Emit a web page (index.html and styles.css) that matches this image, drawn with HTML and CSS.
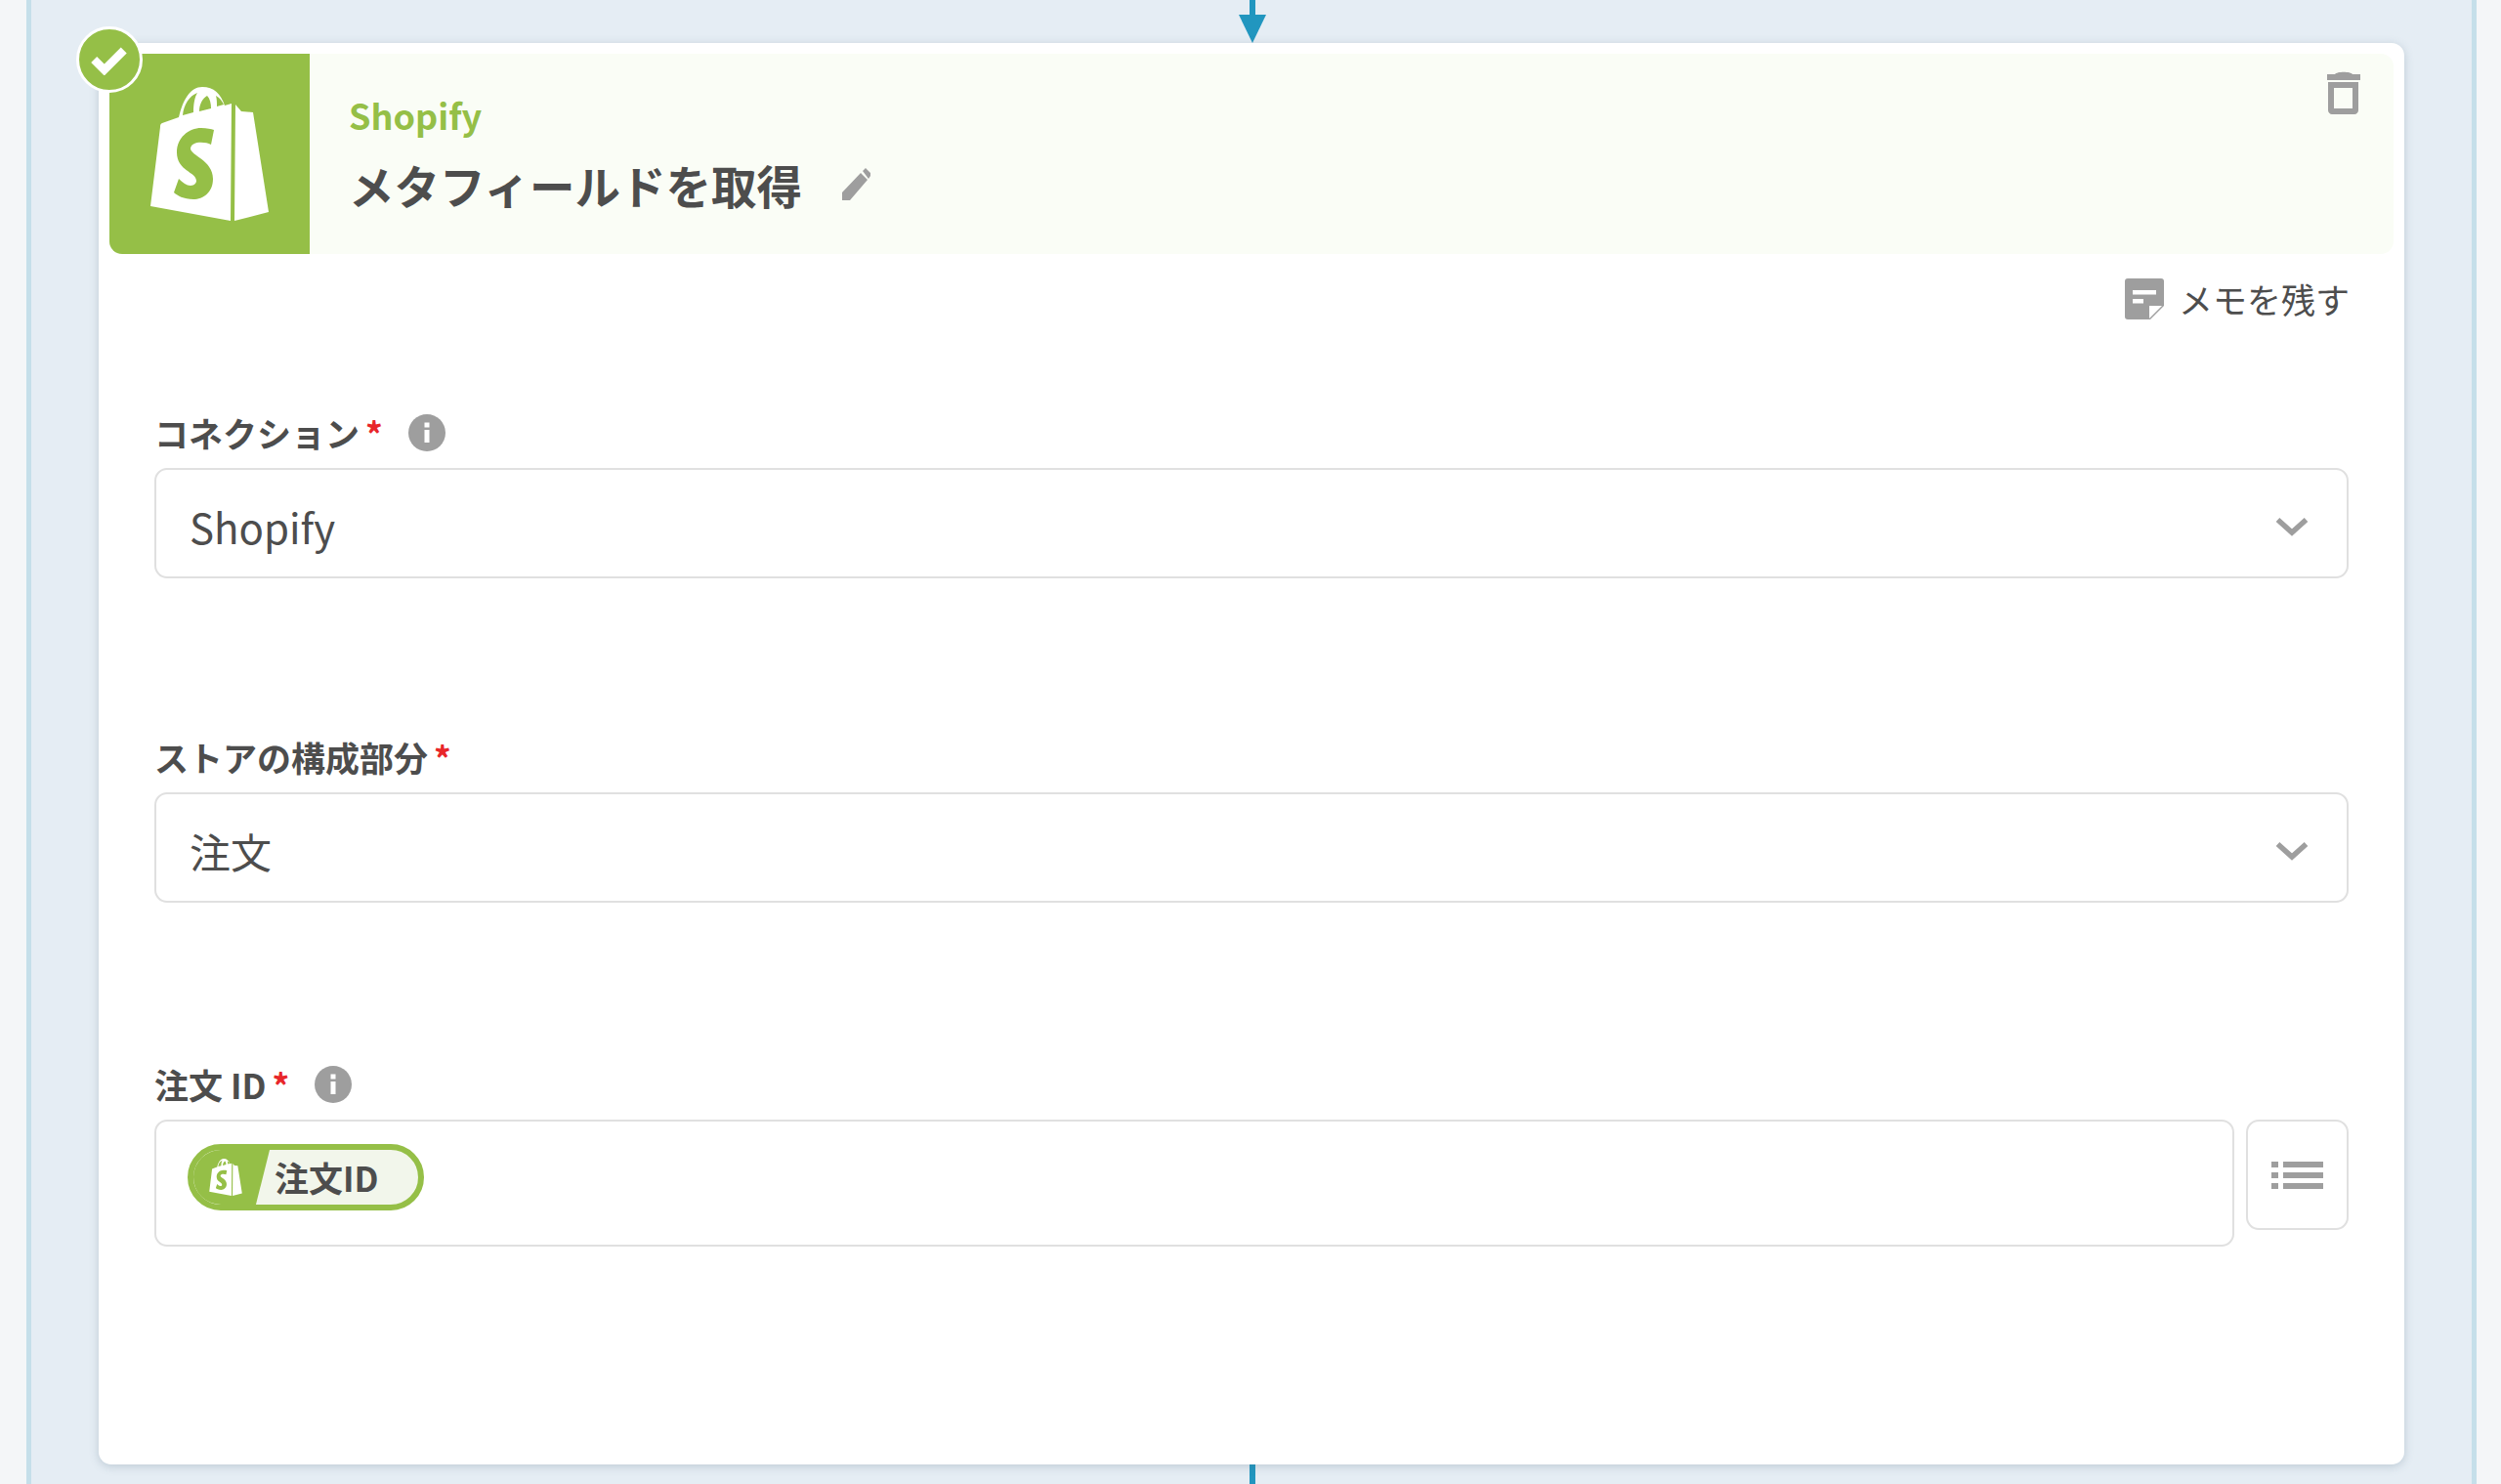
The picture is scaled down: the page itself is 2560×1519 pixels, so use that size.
FILE: index.html
```html
<!DOCTYPE html>
<html lang="ja">
<head>
    <meta charset="UTF-8">
    <meta name="viewport" content="width=device-width, initial-scale=1.0">
    <title>メタフィールドを取得</title>
    <link rel="stylesheet" href="styles.css">
</head>
<body>

    <svg width="0" height="0" class="defs">
        <defs>
            <symbol id="bag" viewBox="0 0 121 137">
                <path fill-rule="evenodd" d="M87 18 L86 137 L121 128 L105 26 L93 25 Z M83 17 L76 19 C72 7 65 0 53 0 C41 0 33 13 29 31 L12 37 C10 38 10 39 10 41 L0 122 L82 137 Z M33 29 C34 18 40 9 48 6 C45 11 44 18 44 26 Z M50 25 C50 18 53 12 58 9 C61 12 62 17 62 22 Z M67 9 C71 11 73 14 75 18 L68 20 C68 16 68 12 67 9 Z M65 44 L62 59 C56 56 42 55 41 63 C41 70 64 75 64 94 C64 108 54 115 44 115 C34 115 27 111 24 108 L29 94 C33 98 37 101 41 101 C45 101 47 98 47 96 C47 87 27 86 27 67 C27 52 39 42 52 42 C58 42 62 43 65 44 Z"/>
            </symbol>
            <symbol id="info" viewBox="0 0 38 38">
                <circle cx="19" cy="19" r="19" fill="#9e9e9e"/>
                <rect x="16.5" y="16" width="5" height="13" fill="#fff"/>
                <rect x="16.5" y="8.5" width="5" height="5" fill="#fff"/>
            </symbol>
            <symbol id="chevron" viewBox="0 0 34 20">
                <path d="M2.5 3 L17 16 L31.5 3" fill="none" stroke="#9e9e9e" stroke-width="5.5"/>
            </symbol>
        </defs>
    </svg>

    <div class="panel">
        <div class="connector-top">
            <span class="connector-line"></span>
            <span class="connector-head"></span>
        </div>

        <div class="card">
            <span class="status-badge">
                <svg width="40" height="32" viewBox="0 0 38 30"><path d="M4 15 L14 25 L33 6" fill="none" stroke="#fff" stroke-width="8"/></svg>
            </span>

            <div class="card-head">
                <div class="app-icon">
                    <svg class="app-logo"><use href="#bag"/></svg>
                </div>
                <div class="head-text">
                    <div class="app-name">Shopify</div>
                    <div class="step-title">
                        <span>メタフィールドを取得</span>
                        <svg class="edit-icon" viewBox="0 0 29 34"><path d="M0 33 L0 25 L19 5 L26 12 L8 33 Z M21 3 L24 0 L29 5 L29 8 L27 11 Z" fill="#9e9e9e"/></svg>
                    </div>
                </div>
                <svg class="trash-icon" viewBox="0 0 34 44">
                    <path fill="#9e9e9e" fill-rule="evenodd" d="M0 3 H8 C10 0 24 0 26 3 H34 V9 H0 Z M1 11 H32 V40 C32 42 30 44 28 44 H5 C3 44 1 42 1 40 Z M7 17 V38 H26 V17 Z"/>
                </svg>
            </div>

            <div class="memo-row">
                <svg class="memo-icon" viewBox="0 0 40 42">
                    <path fill="#9e9e9e" d="M3 0 H37 C39 0 40 1 40 3 V28 L26 42 H3 C1 42 0 41 0 39 V3 C0 1 1 0 3 0 Z"/>
                    <rect x="8" y="12" width="24" height="4.5" fill="#fff"/>
                    <rect x="8" y="21" width="11" height="4.5" fill="#fff"/>
                    <path fill="#fff" d="M25 41 V28 H38 Z"/>
                </svg>
                <span>メモを残す</span>
            </div>

            <div class="field">
                <div class="field-label">
                    <span>コネクション</span><span class="required">*</span>
                    <svg class="info-icon"><use href="#info"/></svg>
                </div>
                <div class="select-box">
                    <span>Shopify</span>
                    <svg class="chevron"><use href="#chevron"/></svg>
                </div>
            </div>

            <div class="field">
                <div class="field-label">
                    <span>ストアの構成部分</span><span class="required">*</span>
                </div>
                <div class="select-box">
                    <span>注文</span>
                    <svg class="chevron"><use href="#chevron"/></svg>
                </div>
            </div>

            <div class="field">
                <div class="field-label">
                    <span>注文 ID</span><span class="required">*</span>
                    <svg class="info-icon"><use href="#info"/></svg>
                </div>
                <div class="input-row">
                    <div class="token-input">
                        <div class="token">
                            <span class="token-icon"><svg class="token-logo"><use href="#bag"/></svg></span>
                            <span class="token-label">注文ID</span>
                        </div>
                    </div>
                    <div class="list-button">
                        <svg width="54" height="34" viewBox="0 0 54 34" fill="#9e9e9e">
                            <rect x="0" y="3" width="7" height="6"/>
                            <rect x="0" y="14" width="7" height="6"/>
                            <rect x="0" y="25" width="7" height="6"/>
                            <rect x="12" y="3" width="41" height="6"/>
                            <rect x="12" y="14" width="41" height="6"/>
                            <rect x="12" y="25" width="41" height="6"/>
                        </svg>
                    </div>
                </div>
            </div>
        </div>

        <div class="connector-bottom"></div>
    </div>

</body>
</html>
```

FILE: styles.css
```css
* {
    box-sizing: border-box;
}
html, body {
    margin: 0;
    height: 1519px;
    overflow: hidden;
}
body {
    font-family: "Noto Sans CJK JP", "Noto Sans", sans-serif;
    background: #f4f6f8;
    color: #4d4d4d;
    padding: 0 25px 0 27px;
}
.defs {
    position: absolute;
}
.panel {
    height: 1519px;
    background: #e5edf4;
    border-left: 5px solid #c5dfea;
    border-right: 5px solid #c5dfea;
    padding: 0 69px;
    display: flex;
    flex-direction: column;
    align-items: center;
}
.connector-top {
    height: 44px;
    margin-left: 2px;
    display: flex;
    flex-direction: column;
    align-items: center;
}
.connector-line {
    width: 6px;
    height: 15px;
    background: #2196bf;
}
.connector-head {
    width: 0;
    height: 0;
    border-left: 14px solid transparent;
    border-right: 14px solid transparent;
    border-top: 29px solid #2196bf;
}
.connector-bottom {
    width: 6px;
    height: 20px;
    margin-left: 2px;
    background: #2196bf;
}
.card {
    position: relative;
    width: 100%;
    height: 1455px;
    background: #fff;
    border-radius: 13px;
    padding: 11px;
    box-shadow: 0 2px 10px rgba(70, 100, 120, 0.25);
}
.status-badge {
    position: absolute;
    left: -23px;
    top: -17px;
    width: 68px;
    height: 68px;
    border-radius: 50%;
    background: #95bf47;
    border: 3px solid #fff;
    display: flex;
    align-items: center;
    justify-content: center;
}
.card-head {
    height: 205px;
    display: flex;
    background: #fafdf6;
    border-radius: 13px;
    overflow: hidden;
}
.app-icon {
    width: 205px;
    background: #95bf47;
    display: flex;
    align-items: center;
    justify-content: center;
}
.app-logo {
    width: 121px;
    height: 137px;
    fill: #fff;
}
.head-text {
    flex: 1;
    padding: 37px 0 0 40px;
}
.app-name {
    color: #95bf47;
    font-size: 36px;
    font-weight: 700;
    line-height: 50px;
}
.step-title {
    margin-top: 17px;
    font-size: 46.5px;
    font-weight: 700;
    line-height: 60px;
    display: flex;
    align-items: center;
    gap: 41px;
}
.edit-icon {
    width: 29px;
    height: 34px;
}
.trash-icon {
    width: 34px;
    height: 44px;
    margin: 18px 34px 0 0;
}
.memo-row {
    display: flex;
    justify-content: flex-end;
    align-items: center;
    gap: 15px;
    padding: 25px 45px 0 0;
    font-size: 35px;
    line-height: 42px;
}
.memo-icon {
    width: 40px;
    height: 42px;
}
.field {
    padding: 0 46px;
    margin-top: 94px;
}
.field + .field {
    margin-top: 161px;
}
.field:last-child {
    margin-top: 164px;
}
.field-label {
    display: flex;
    align-items: center;
    font-size: 35px;
    font-weight: 700;
    line-height: 44px;
    margin-bottom: 14px;
}
.required {
    color: #e8262a;
    margin-left: 6px;
}
.info-icon {
    width: 38px;
    height: 38px;
    margin-left: 26px;
}
.select-box {
    height: 113px;
    border: 2px solid #e0e0e0;
    border-radius: 13px;
    display: flex;
    align-items: center;
    justify-content: space-between;
    padding: 6px 39px 0 34px;
    font-size: 42px;
}
.chevron {
    width: 34px;
    height: 20px;
}
.input-row {
    display: flex;
    align-items: flex-start;
    gap: 12px;
}
.token-input {
    flex: 1;
    height: 130px;
    border: 2px solid #e0e0e0;
    border-radius: 13px;
    padding: 23px 32px;
}
.token {
    width: 242px;
    height: 68px;
    display: flex;
    background: #f2f6eb;
    border: 6px solid #95bf47;
    border-radius: 34px;
    overflow: hidden;
}
.token-icon {
    width: 78px;
    background: #95bf47;
    clip-path: polygon(0 0, 100% 0, 82% 100%, 0 100%);
    display: flex;
    align-items: center;
    justify-content: center;
    padding-right: 12px;
}
.token-logo {
    width: 34px;
    height: 38px;
    fill: #fff;
}
.token-label {
    font-size: 35px;
    font-weight: 700;
    line-height: 56px;
    margin-left: 5px;
}
.list-button {
    width: 105px;
    height: 113px;
    border: 2px solid #e0e0e0;
    border-radius: 13px;
    display: flex;
    align-items: center;
    justify-content: center;
}
```
